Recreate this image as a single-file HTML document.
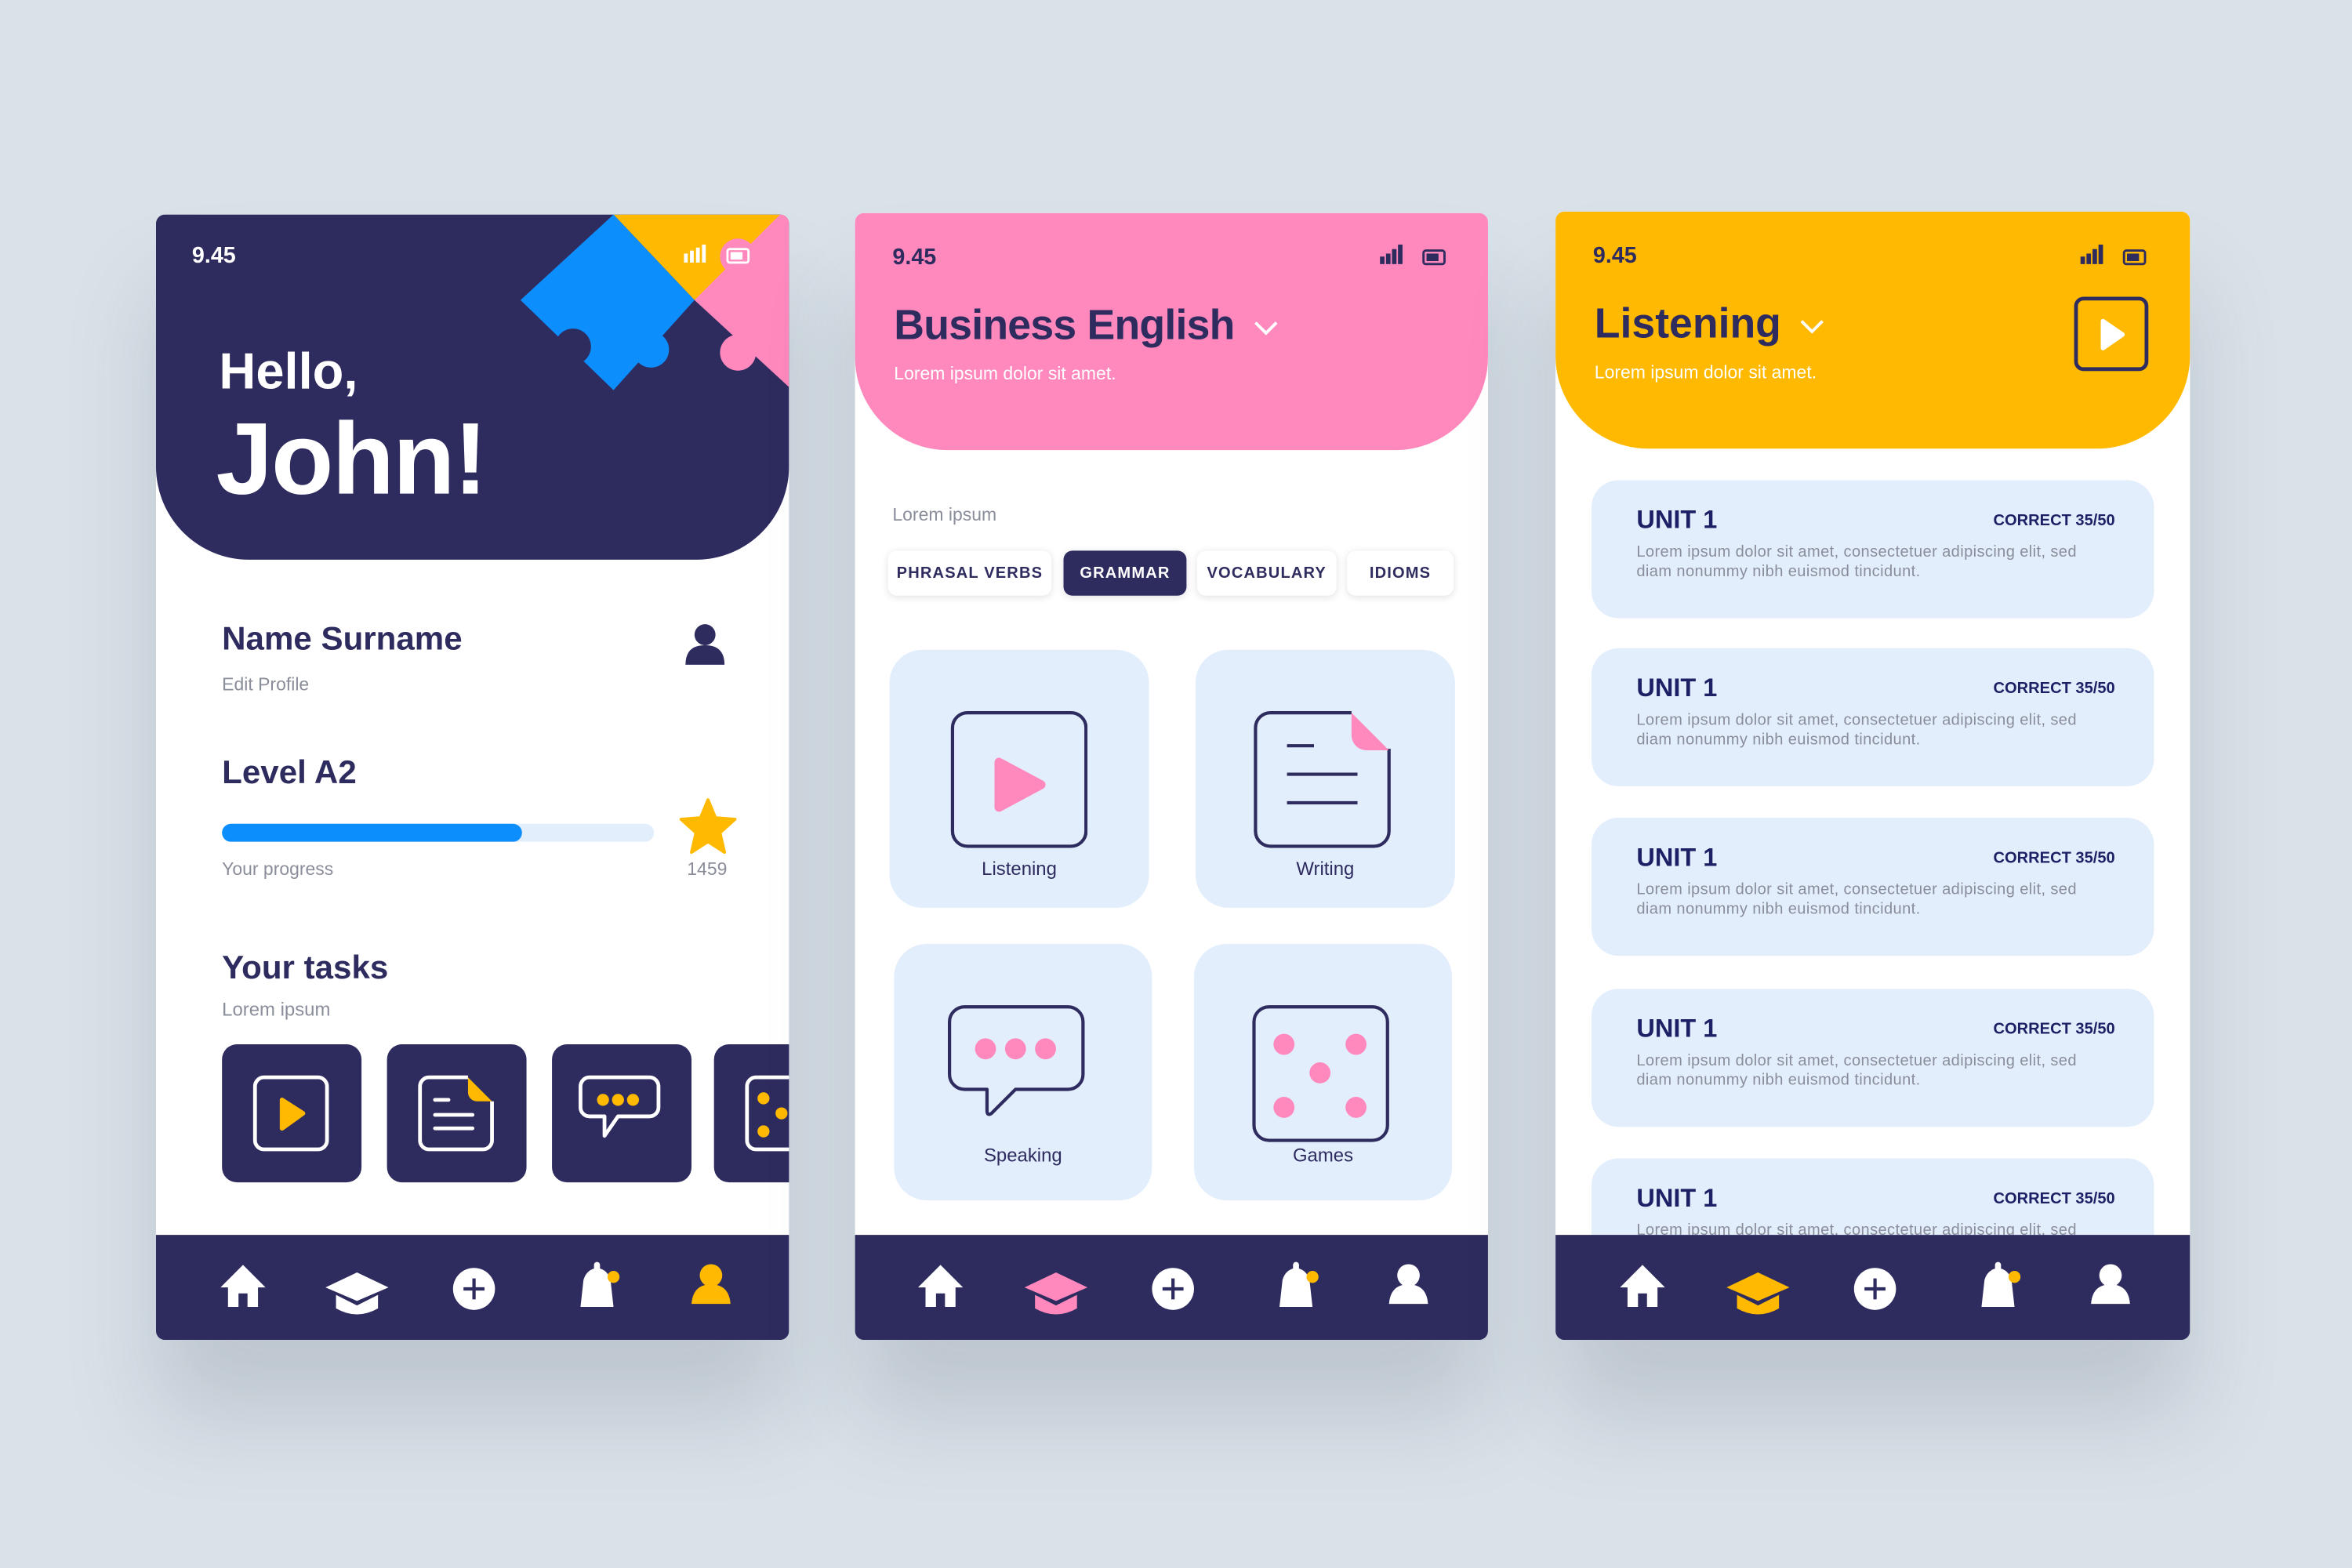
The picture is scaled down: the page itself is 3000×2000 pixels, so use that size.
<!DOCTYPE html>
<html><head><meta charset="utf-8"><style>
*{margin:0;padding:0;box-sizing:border-box}
html,body{width:3000px;height:2000px;overflow:hidden;background:#dae2e9}
#w{position:absolute;left:0;top:0;width:1568px;height:1045px;transform:scale(1.91327,1.91388);transform-origin:0 0;font-family:"Liberation Sans",sans-serif;color:#2e2b5f}
.a{position:absolute}
.ph{position:absolute;top:143px;width:422px;height:750px;background:#fff;border-radius:6px;overflow:hidden;box-shadow:0 50px 60px rgba(60,70,90,.18)}
.hd{position:absolute;left:0;top:0;width:100%;border-radius:0 0 62px 62px}
.nav{position:absolute;left:0;bottom:0;width:100%;height:70px;background:#2e2b5f}
.t{position:absolute;font-weight:bold;font-size:15px}
.g{color:#8a8d9a;font-size:12px}
.chip{position:absolute;top:225px;height:30px;border-radius:6px;background:#fff;box-shadow:0 1px 5px rgba(0,0,0,.12);font-size:10.5px;font-weight:bold;letter-spacing:.6px;text-align:center;line-height:30px;color:#2e2b5f}
.card{position:absolute;background:#e3eefd;border-radius:22px}
.cl{position:absolute;width:100%;text-align:center;font-size:12.5px;color:#2e2b5f}
.unit{position:absolute;left:24px;width:375px;height:92px;background:#e3eefd;border-radius:18px}
.unit b{position:absolute;left:30px;top:17px;font-size:17px;color:#1f1f66}
.unit i{position:absolute;right:26px;top:21px;font-style:normal;font-weight:bold;font-size:10.5px;color:#1f1f66}
.unit p{position:absolute;left:30px;top:42px;width:340px;font-size:10.5px;line-height:13px;color:#8a8d9a;letter-spacing:.2px;white-space:nowrap}
.tile{position:absolute;top:553px;width:93px;height:92px;border-radius:10px;background:#2e2b5f}
.ttl{position:absolute;left:26px;top:59px;font-size:28px;font-weight:bold;color:#2e2b5f;white-space:nowrap}
.ttl svg{margin-left:12px;vertical-align:middle}
</style></head><body><div id="w">

<!-- PHONE 1 -->
<div class="ph" style="left:104px">
 <div class="hd" style="height:230px;background:#2e2b5f;overflow:hidden">
  <svg class="a" style="left:0;top:0" width="422" height="230">
   <polygon points="305,0 422,0 359,57" fill="#ffb900"/>
   <polygon points="416,0 422,0 422,115 359,57" fill="#ff88bd"/>
   <polygon points="305,0 359,57 305,117 243,57" fill="#0d8efd"/>
   <circle cx="278" cy="88" r="12" fill="#2e2b5f"/>
   <circle cx="330" cy="90" r="12" fill="#0d8efd"/>
   <circle cx="388" cy="92" r="12" fill="#ff88bd"/>
   <circle cx="388" cy="28" r="12" fill="#ff88bd"/>
   <rect x="352" y="26" width="2.5" height="6" fill="#fff"/><rect x="356" y="24" width="2.5" height="8" fill="#fff"/><rect x="360" y="22" width="2.5" height="10" fill="#fff"/><rect x="364" y="20" width="2.5" height="12" fill="#fff"/>
   <rect x="381" y="23" width="14" height="9" rx="1.5" fill="none" stroke="#fff" stroke-width="1.5"/><rect x="383" y="25" width="8" height="5" fill="#fff"/>
  </svg>
  <div class="t" style="left:24px;top:19px;color:#fff">9.45</div>
  <div class="a" style="left:42px;top:86px;font-size:34px;font-weight:bold;color:#fff">Hello,</div>
  <div class="a" style="left:40px;top:124px;font-size:68px;font-weight:bold;color:#fff;letter-spacing:-1px">John!</div>
 </div>
 <div class="a" style="left:44px;top:270px;font-size:22px;font-weight:bold">Name Surname</div>
 <div class="a g" style="left:44px;top:306px">Edit Profile</div>
 <svg class="a" style="left:350px;top:270px" width="34" height="32"><circle cx="16" cy="10" r="7" fill="#2e2b5f"/><path d="M3 30 Q3 17 16 17 Q29 17 29 30Z" fill="#2e2b5f"/></svg>
 <div class="a" style="left:44px;top:359px;font-size:22px;font-weight:bold">Level A2</div>
 <div class="a" style="left:44px;top:406px;width:288px;height:12px;border-radius:6px;background:#e3eefd"></div>
 <div class="a" style="left:44px;top:406px;width:200px;height:12px;border-radius:6px;background:#0d8efd"></div>
 <svg class="a" style="left:348px;top:389px" width="40" height="38"><polygon points="20,1 25,13 38,14 28,23 31,36 20,29 9,36 12,23 2,14 15,13" fill="#ffb900" stroke="#ffb900" stroke-width="2" stroke-linejoin="round"/></svg>
 <div class="a g" style="left:44px;top:429px">Your progress</div>
 <div class="a g" style="left:354px;top:429px">1459</div>
 <div class="a" style="left:44px;top:489px;font-size:22px;font-weight:bold">Your tasks</div>
 <div class="a g" style="left:44px;top:523px;font-size:12.5px">Lorem ipsum</div>
 <div class="tile" style="left:44px"><svg width="93" height="92"><rect x="22" y="22" width="48" height="48" rx="6" fill="none" stroke="#fff" stroke-width="2.5"/><path d="M40 37 L54 46 L40 56Z" fill="#ffb900" stroke="#ffb900" stroke-width="3" stroke-linejoin="round"/></svg></div>
 <div class="tile" style="left:154px"><svg width="93" height="92"><path d="M54 22 H28 a6 6 0 0 0-6 6 V64 a6 6 0 0 0 6 6 H64 a6 6 0 0 0 6-6 V38" fill="none" stroke="#fff" stroke-width="2.5"/><path d="M54 22 L70 38 H60 a6 6 0 0 1-6-6Z" fill="#ffb900"/><path d="M32 37H41M32 47H57M32 56H57" stroke="#fff" stroke-width="2.5" stroke-linecap="round"/></svg></div>
 <div class="tile" style="left:264px"><svg width="93" height="92"><path d="M25 22 H65 a6 6 0 0 1 6 6 V42 a6 6 0 0 1-6 6 H44 L35 61 V48 H25 a6 6 0 0 1-6-6 V28 a6 6 0 0 1 6-6Z" fill="none" stroke="#fff" stroke-width="2.5" stroke-linejoin="round"/><circle cx="34" cy="37" r="4" fill="#ffb900"/><circle cx="44" cy="37" r="4" fill="#ffb900"/><circle cx="54" cy="37" r="4" fill="#ffb900"/></svg></div>
 <div class="tile" style="left:372px"><svg width="93" height="92"><rect x="22" y="22" width="48" height="48" rx="6" fill="none" stroke="#fff" stroke-width="2.5"/><circle cx="33" cy="36" r="4" fill="#ffb900"/><circle cx="45" cy="46" r="4" fill="#ffb900"/><circle cx="33" cy="58" r="4" fill="#ffb900"/></svg></div>
 <div class="nav"><svg width="422" height="70">
  <path d="M58 20 L73 35 H68 V48 H61 V39 H55 V48 H48 V35 H43Z" fill="#fff"/>
  <path d="M134 25 L155 35 L134 44 L113 35Z" fill="#fff"/><path d="M120 40 L134 47 L148 40 V49 Q134 57 120 49Z" fill="#fff"/>
  <circle cx="212" cy="36" r="14" fill="#fff"/><path d="M212 29V43M205 36H219" stroke="#2e2b5f" stroke-width="2.2"/>
  <path d="M283 48 L285 30 Q287 23 294 22 Q301 23 303 30 L305 48Z" fill="#fff"/><rect x="292" y="18" width="4" height="6" rx="2" fill="#fff"/><circle cx="305" cy="28" r="4" fill="#ffb900"/>
  <circle cx="370" cy="27" r="7.5" fill="#ffb900"/><path d="M357 46 Q358 33 370 33 Q382 33 383 46Z" fill="#ffb900"/>
 </svg></div>
</div>

<!-- PHONE 2 -->
<div class="ph" style="left:570px;top:142px;height:751px">
 <div class="hd" style="height:158px;background:#ff88bd">
  <svg class="a" style="left:340px;top:20px" width="60" height="20"><rect x="10" y="9" width="3" height="5" fill="#2e2b5f"/><rect x="14" y="7" width="3" height="7" fill="#2e2b5f"/><rect x="18" y="4" width="3" height="10" fill="#2e2b5f"/><rect x="22" y="1" width="3" height="13" fill="#2e2b5f"/><rect x="39" y="5" width="14" height="9" rx="1.5" fill="none" stroke="#2e2b5f" stroke-width="1.5"/><rect x="41" y="7" width="8" height="5" fill="#2e2b5f"/></svg>
  <div class="t" style="left:25px;top:21px">9.45</div>
  <div class="ttl" style="letter-spacing:-0.4px">Business English<svg width="18" height="12"><path d="M2 2 L9 9 L16 2" fill="none" stroke="#fff" stroke-width="2"/></svg></div>
  <div class="a" style="left:26px;top:100px;font-size:12px;color:#fff">Lorem ipsum dolor sit amet.</div>
 </div>
 <div class="a g" style="left:25px;top:194px">Lorem ipsum</div>
 <div class="chip" style="left:22px;width:109px">PHRASAL VERBS</div>
 <div class="chip" style="left:139px;width:82px;background:#2e2b5f;color:#fff">GRAMMAR</div>
 <div class="chip" style="left:228px;width:93px">VOCABULARY</div>
 <div class="chip" style="left:328px;width:71px">IDIOMS</div>
 <div class="card" style="left:23px;top:291px;width:173px;height:172px"><svg class="a" style="left:40px;top:40px" width="92" height="94"><rect x="2" y="2" width="89" height="89" rx="10" fill="none" stroke="#2e2b5f" stroke-width="2.2"/><path d="M33 35 L61 50 L33 65Z" fill="#ff88bd" stroke="#ff88bd" stroke-width="6" stroke-linejoin="round"/></svg><div class="cl" style="top:139px">Listening</div></div>
 <div class="card" style="left:227px;top:291px;width:173px;height:172px"><svg class="a" style="left:38px;top:40px" width="94" height="94"><path d="M66 2 H12 a10 10 0 0 0-10 10 V81 a10 10 0 0 0 10 10 H81 a10 10 0 0 0 10-10 V26" fill="none" stroke="#2e2b5f" stroke-width="2.2"/><path d="M66 2 L91 27 H76 a10 10 0 0 1-10-10Z" fill="#ff88bd"/><path d="M23 24H41M23 43H70M23 62H70" stroke="#2e2b5f" stroke-width="2.2"/></svg><div class="cl" style="top:139px">Writing</div></div>
 <div class="card" style="left:26px;top:487px;width:172px;height:171px"><svg class="a" style="left:35px;top:40px" width="94" height="90"><path d="M12 2 H81 a10 10 0 0 1 10 10 V47 a10 10 0 0 1-10 10 H46 L30 73 Q27 75 27 71 V57 H12 a10 10 0 0 1-10-10 V12 a10 10 0 0 1 10-10Z" fill="none" stroke="#2e2b5f" stroke-width="2.2" stroke-linejoin="round"/><circle cx="26" cy="30" r="7" fill="#ff88bd"/><circle cx="46" cy="30" r="7" fill="#ff88bd"/><circle cx="66" cy="30" r="7" fill="#ff88bd"/></svg><div class="cl" style="top:134px">Speaking</div></div>
 <div class="card" style="left:226px;top:487px;width:172px;height:171px"><svg class="a" style="left:38px;top:40px" width="94" height="94"><rect x="2" y="2" width="89" height="89" rx="10" fill="none" stroke="#2e2b5f" stroke-width="2.2"/><circle cx="22" cy="27" r="7" fill="#ff88bd"/><circle cx="70" cy="27" r="7" fill="#ff88bd"/><circle cx="46" cy="46" r="7" fill="#ff88bd"/><circle cx="22" cy="69" r="7" fill="#ff88bd"/><circle cx="70" cy="69" r="7" fill="#ff88bd"/></svg><div class="cl" style="top:134px">Games</div></div>
 <div class="nav"><svg width="422" height="70">
  <path d="M57 20 L72 35 H67 V48 H60 V39 H54 V48 H47 V35 H42Z" fill="#fff"/>
  <path d="M134 25 L155 35 L134 44 L113 35Z" fill="#ff88bd"/><path d="M120 40 L134 47 L148 40 V49 Q134 57 120 49Z" fill="#ff88bd"/>
  <circle cx="212" cy="36" r="14" fill="#fff"/><path d="M212 29V43M205 36H219" stroke="#2e2b5f" stroke-width="2.2"/>
  <path d="M283 48 L285 30 Q287 23 294 22 Q301 23 303 30 L305 48Z" fill="#fff"/><rect x="292" y="18" width="4" height="6" rx="2" fill="#fff"/><circle cx="305" cy="28" r="4" fill="#ffb900"/>
  <circle cx="369" cy="27" r="7.5" fill="#fff"/><path d="M356 46 Q357 33 369 33 Q381 33 382 46Z" fill="#fff"/>
 </svg></div>
</div>

<!-- PHONE 3 -->
<div class="ph" style="left:1037px;top:141px;width:423px;height:752px">
 <div class="hd" style="height:158px;background:#ffb900">
  <svg class="a" style="left:340px;top:21px" width="60" height="20"><rect x="10" y="9" width="3" height="5" fill="#2e2b5f"/><rect x="14" y="7" width="3" height="7" fill="#2e2b5f"/><rect x="18" y="4" width="3" height="10" fill="#2e2b5f"/><rect x="22" y="1" width="3" height="13" fill="#2e2b5f"/><rect x="39" y="5" width="14" height="9" rx="1.5" fill="none" stroke="#2e2b5f" stroke-width="1.5"/><rect x="41" y="7" width="8" height="5" fill="#2e2b5f"/></svg>
  <div class="t" style="left:25px;top:21px">9.45</div>
  <div class="ttl">Listening<svg width="18" height="12"><path d="M2 2 L9 9 L16 2" fill="none" stroke="#fff" stroke-width="2"/></svg></div>
  <div class="a" style="left:26px;top:100px;font-size:12px;color:#fff">Lorem ipsum dolor sit amet.</div>
  <svg class="a" style="left:345px;top:56px" width="52" height="52"><rect x="2" y="2" width="47" height="47" rx="5" fill="none" stroke="#2e2b5f" stroke-width="2.5"/><path d="M20 17 L33 26 L20 35Z" fill="#fff" stroke="#fff" stroke-width="3" stroke-linejoin="round"/></svg>
 </div>
 <div class="unit" style="top:179px"><b>UNIT 1</b><i>CORRECT 35/50</i><p>Lorem ipsum dolor sit amet, consectetuer adipiscing elit, sed<br>diam nonummy nibh euismod tincidunt.</p></div>
 <div class="unit" style="top:291px"><b>UNIT 1</b><i>CORRECT 35/50</i><p>Lorem ipsum dolor sit amet, consectetuer adipiscing elit, sed<br>diam nonummy nibh euismod tincidunt.</p></div>
 <div class="unit" style="top:404px"><b>UNIT 1</b><i>CORRECT 35/50</i><p>Lorem ipsum dolor sit amet, consectetuer adipiscing elit, sed<br>diam nonummy nibh euismod tincidunt.</p></div>
 <div class="unit" style="top:518px"><b>UNIT 1</b><i>CORRECT 35/50</i><p>Lorem ipsum dolor sit amet, consectetuer adipiscing elit, sed<br>diam nonummy nibh euismod tincidunt.</p></div>
 <div class="unit" style="top:631px"><b>UNIT 1</b><i>CORRECT 35/50</i><p>Lorem ipsum dolor sit amet, consectetuer adipiscing elit, sed<br>diam nonummy nibh euismod tincidunt.</p></div>
 <div class="nav"><svg width="423" height="70">
  <path d="M58 20 L73 35 H68 V48 H61 V39 H55 V48 H48 V35 H43Z" fill="#fff"/>
  <path d="M135 25 L156 35 L135 44 L114 35Z" fill="#ffb900"/><path d="M121 40 L135 47 L149 40 V49 Q135 57 121 49Z" fill="#ffb900"/>
  <circle cx="213" cy="36" r="14" fill="#fff"/><path d="M213 29V43M206 36H220" stroke="#2e2b5f" stroke-width="2.2"/>
  <path d="M284 48 L286 30 Q288 23 295 22 Q302 23 304 30 L306 48Z" fill="#fff"/><rect x="293" y="18" width="4" height="6" rx="2" fill="#fff"/><circle cx="306" cy="28" r="4" fill="#ffb900"/>
  <circle cx="370" cy="27" r="7.5" fill="#fff"/><path d="M357 46 Q358 33 370 33 Q382 33 383 46Z" fill="#fff"/>
 </svg></div>
</div>

</div></body></html>
